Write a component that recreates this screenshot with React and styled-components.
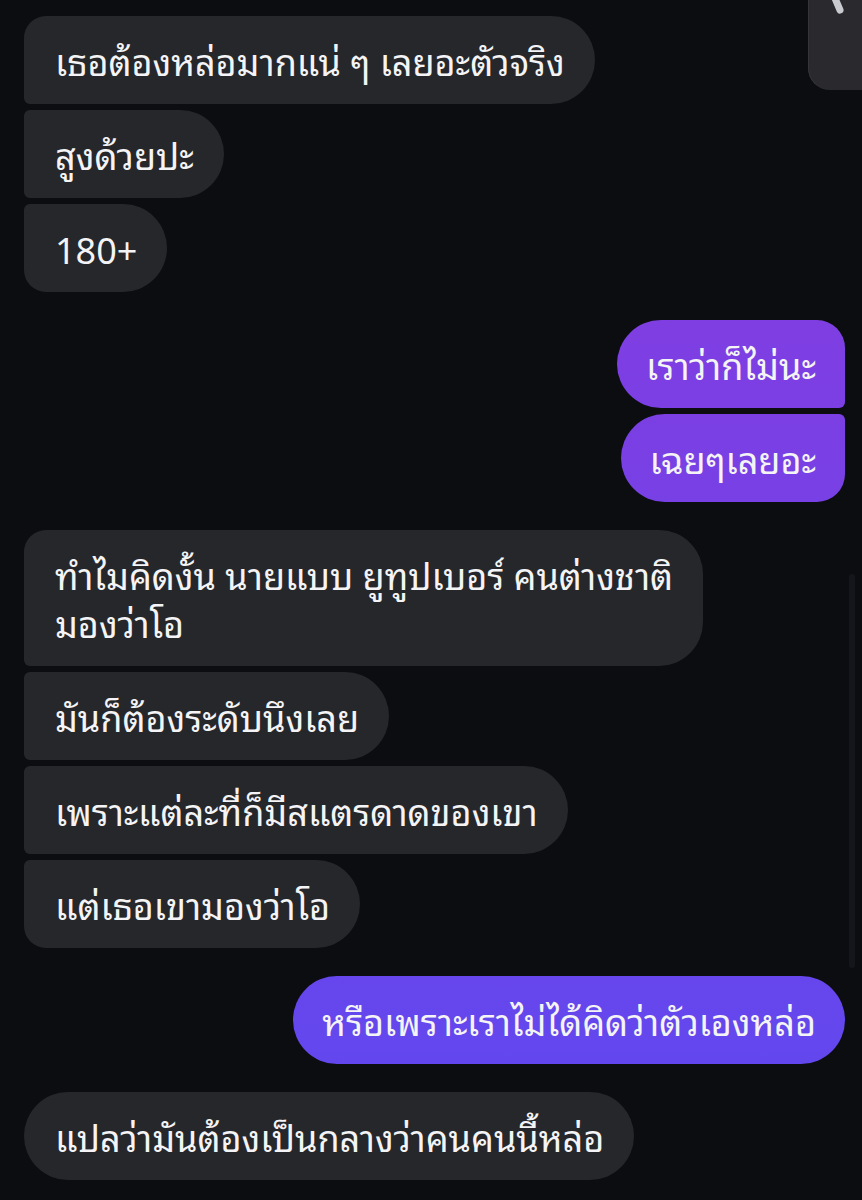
import React from 'react';
import styled, { createGlobalStyle, css } from 'styled-components';

const GlobalStyle = createGlobalStyle`
  html, body {
    margin: 0;
    padding: 0;
    background: #0c0d11;
  }
  body {
    font-family: "Noto Sans Thai Looped", "Noto Sans Thai", "Noto Sans", Roboto, sans-serif;
    -webkit-font-smoothing: antialiased;
  }
`;

const Screen = styled.div`
  position: relative;
  width: 862px;
  height: 1200px;
  overflow: hidden;
  background: #0c0d11;
`;

const Thread = styled.div`
  display: flex;
  flex-direction: column;
  gap: 28px;
  padding: 16px 17px 0 24px;
`;

const Group = styled.div`
  display: flex;
  flex-direction: column;
  gap: 6px;
  align-items: ${(p) => (p.$side === 'out' ? 'flex-end' : 'flex-start')};
`;

const BIG = 44;
const OUTER = 22;
const SMALL = 6;

const cornersFor = (side, pos) => {
  const top = pos === 'first' ? OUTER : pos === 'single' ? BIG : SMALL;
  const bottom = pos === 'last' ? OUTER : pos === 'single' ? BIG : SMALL;
  if (side === 'out') {
    return `${BIG}px ${top + (pos === 'first' ? 6 : 0)}px ${bottom + (pos === 'last' ? 6 : 0)}px ${BIG}px`;
  }
  return `${top}px ${BIG}px ${BIG}px ${bottom}px`;
};

const Bubble = styled.div`
  box-sizing: border-box;
  max-width: 720px;
  padding: 20px 30px 20px 31px;
  font-size: 36px;
  line-height: 48px;
  white-space: pre-line;
  color: #f4f4f6;
  border-radius: ${(p) => cornersFor(p.$side, p.$pos)};
  ${(p) =>
    p.$side === 'out'
      ? css`
          padding: 20px 29px;
          background: linear-gradient(180deg, #8a3add 0px, #5e49f0 1200px);
          background-attachment: fixed;
        `
      : css`
          background: #26272b;
        `}
`;

const CornerCard = styled.div`
  position: absolute;
  top: 0;
  right: 0;
  width: 54px;
  height: 90px;
  background: #2a2a2e;
  border-bottom-left-radius: 22px;
  box-shadow: inset 1px 0 0 #34343a;
`;

const ScrollTrack = styled.div`
  position: absolute;
  right: 7px;
  top: 574px;
  width: 6px;
  height: 394px;
  border-radius: 3px;
  background: #15161b;
`;

const groups = [
  {
    side: 'in',
    items: ['เธอต้องหล่อมากแน่ ๆ เลยอะตัวจริง', 'สูงด้วยปะ', '180+'],
  },
  {
    side: 'out',
    items: ['เราว่าก็ไม่นะ', 'เฉยๆเลยอะ'],
  },
  {
    side: 'in',
    items: [
      'ทำไมคิดงั้น นายแบบ ยูทูปเบอร์ คนต่างชาติ\nมองว่าโอ',
      'มันก็ต้องระดับนึงเลย',
      'เพราะแต่ละที่ก็มีสแตรดาดของเขา',
      'แต่เธอเขามองว่าโอ',
    ],
  },
  {
    side: 'out',
    items: ['หรือเพราะเราไม่ได้คิดว่าตัวเองหล่อ'],
  },
  {
    side: 'in',
    items: ['แปลว่ามันต้องเป็นกลางว่าคนคนนี้หล่อ'],
  },
];

const posOf = (i, n) => {
  if (n === 1) return 'single';
  if (i === 0) return 'first';
  if (i === n - 1) return 'last';
  return 'middle';
};

export default function App() {
  return (
    <>
      <GlobalStyle />
      <Screen>
        <Thread>
          {groups.map((g, gi) => (
            <Group key={gi} $side={g.side}>
              {g.items.map((text, i) => (
                <Bubble key={i} $side={g.side} $pos={posOf(i, g.items.length)}>
                  {text}
                </Bubble>
              ))}
            </Group>
          ))}
        </Thread>
        <CornerCard>
          <svg width="54" height="20" viewBox="0 0 54 20">
            <line x1="26" y1="-4" x2="32" y2="10" stroke="#c9c9d0" strokeWidth="7" strokeLinecap="round" />
          </svg>
        </CornerCard>
        <ScrollTrack />
      </Screen>
    </>
  );
}
